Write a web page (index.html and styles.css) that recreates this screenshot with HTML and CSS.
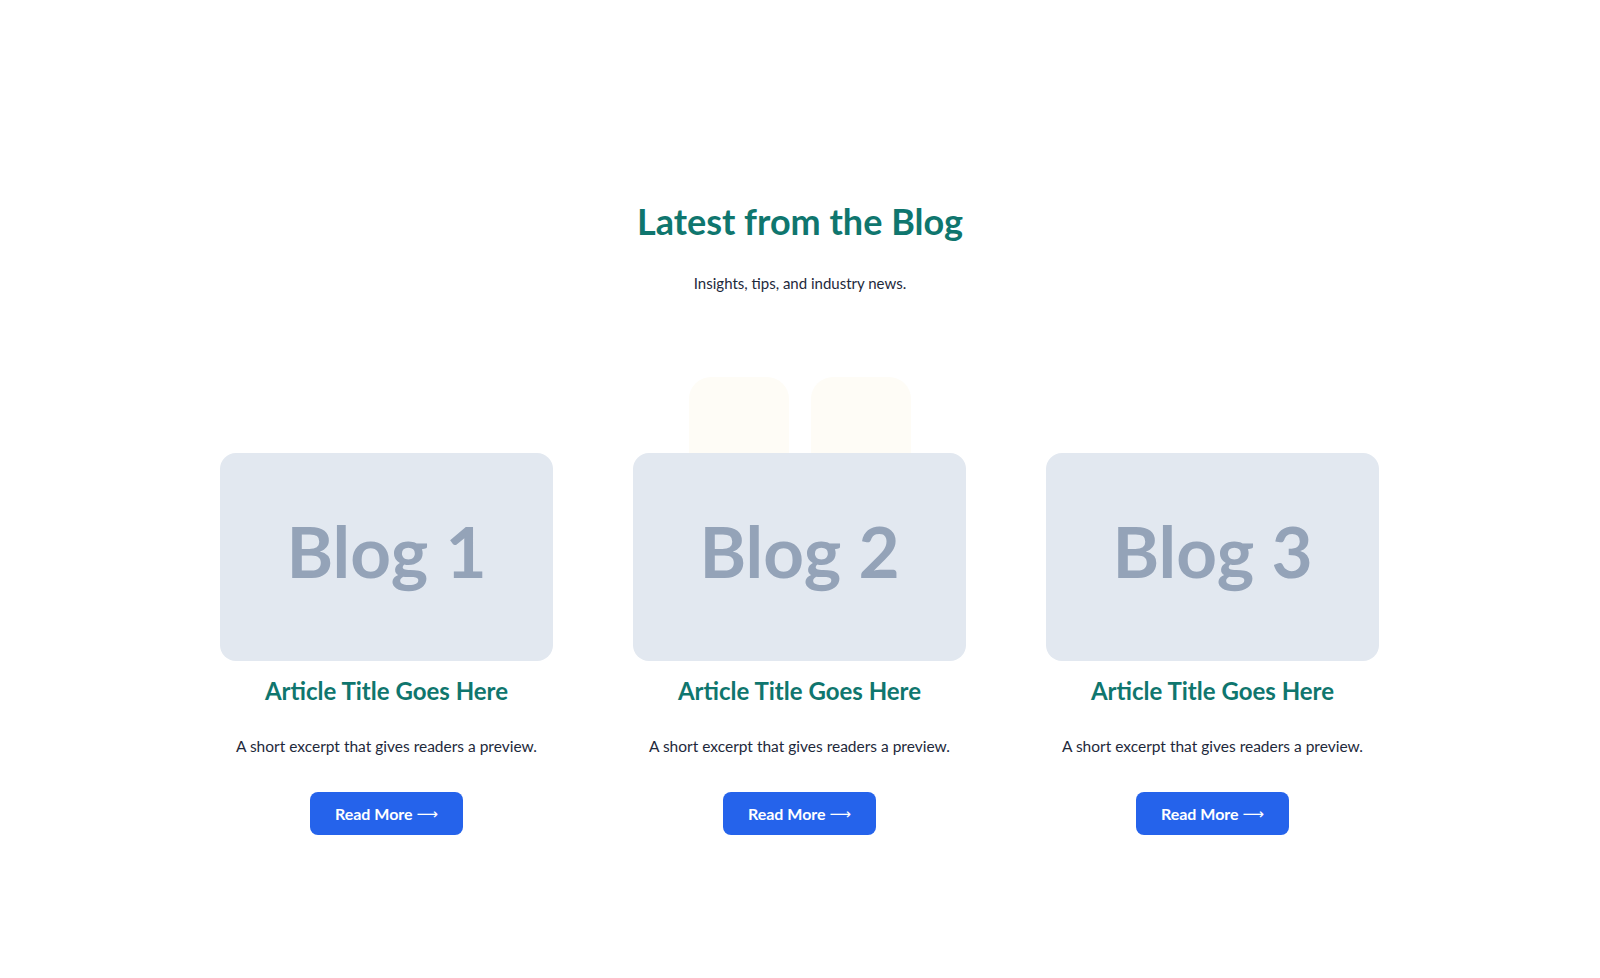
FILE: index.html
```html
<!DOCTYPE html>
<html lang="en">
<head>
<meta charset="utf-8">
<title>Latest from the Blog</title>
<link rel="stylesheet" href="styles.css">
</head>
<body>
<section class="blog">
  <h2 class="blog-title">Latest from the Blog</h2>
  <p class="blog-sub">Insights, tips, and industry news.</p>
  <div class="grid-wrap">
    <div class="deco">
      <span class="deco-box"></span>
      <span class="deco-box"></span>
    </div>
    <div class="grid">
      <article class="card">
        <div class="thumb">Blog 1</div>
        <h3 class="card-title">Article Title Goes Here</h3>
        <p class="excerpt">A short excerpt that gives readers a preview.</p>
        <a class="btn" href="#">Read More <span class="arrow">⟶</span></a>
      </article>
      <article class="card">
        <div class="thumb">Blog 2</div>
        <h3 class="card-title">Article Title Goes Here</h3>
        <p class="excerpt">A short excerpt that gives readers a preview.</p>
        <a class="btn" href="#">Read More <span class="arrow">⟶</span></a>
      </article>
      <article class="card">
        <div class="thumb">Blog 3</div>
        <h3 class="card-title">Article Title Goes Here</h3>
        <p class="excerpt">A short excerpt that gives readers a preview.</p>
        <a class="btn" href="#">Read More <span class="arrow">⟶</span></a>
      </article>
    </div>
  </div>
</section>
</body>
</html>
```
FILE: styles.css
```css
* { box-sizing: border-box; }
html, body { margin: 0; padding: 0; background: #ffffff; }
body {
  font-family: "Lato", "Inter", sans-serif;
  color: #1e293b;
}
.blog {
  padding-top: 199px;
  display: flex;
  flex-direction: column;
  align-items: center;
}
.blog-title {
  margin: 0;
  font-size: 36px;
  line-height: 44px;
  font-weight: 700;
  color: #0f766e;
}
.blog-sub {
  margin: 28px 0 0;
  font-size: 15px;
  line-height: 24px;
  color: #1e293b;
}
.grid-wrap {
  position: relative;
  margin-top: 158px;
  width: 1160px;
}
.deco {
  position: absolute;
  top: -76px;
  left: 0;
  right: 0;
  display: flex;
  justify-content: center;
  gap: 22px;
}
.deco-box {
  width: 100px;
  height: 120px;
  border-radius: 22px;
  background: #fefcf6;
}
.grid {
  position: relative;
  display: grid;
  grid-template-columns: repeat(3, 333px);
  gap: 80px;
}
.card {
  display: flex;
  flex-direction: column;
  align-items: center;
  text-align: center;
}
.thumb {
  width: 333px;
  height: 208px;
  border-radius: 16px;
  background: #e2e8f0;
  color: #94a3b8;
  font-family: "Lato", sans-serif;
  font-weight: 700;
  font-size: 71px;
  display: flex;
  align-items: center;
  justify-content: center;
  padding-bottom: 14px;
}
.card-title {
  margin: 14px 0 0;
  font-size: 24px;
  line-height: 32px;
  font-weight: 700;
  color: #0f766e;
}
.excerpt {
  margin: 27px 0 0;
  font-size: 15.5px;
  line-height: 24px;
  color: #1e293b;
}
.btn {
  margin-top: 34px;
  width: 153px;
  height: 43px;
  border-radius: 8px;
  background: #2563eb;
  color: #ffffff;
  text-decoration: none;
  font-size: 16px;
  font-weight: 700;
  display: flex;
  align-items: center;
  justify-content: center;
  gap: 4px;
}
.arrow {
  font-family: "DejaVu Sans", sans-serif;
  font-weight: 400;
  font-size: 15px;
}
```
